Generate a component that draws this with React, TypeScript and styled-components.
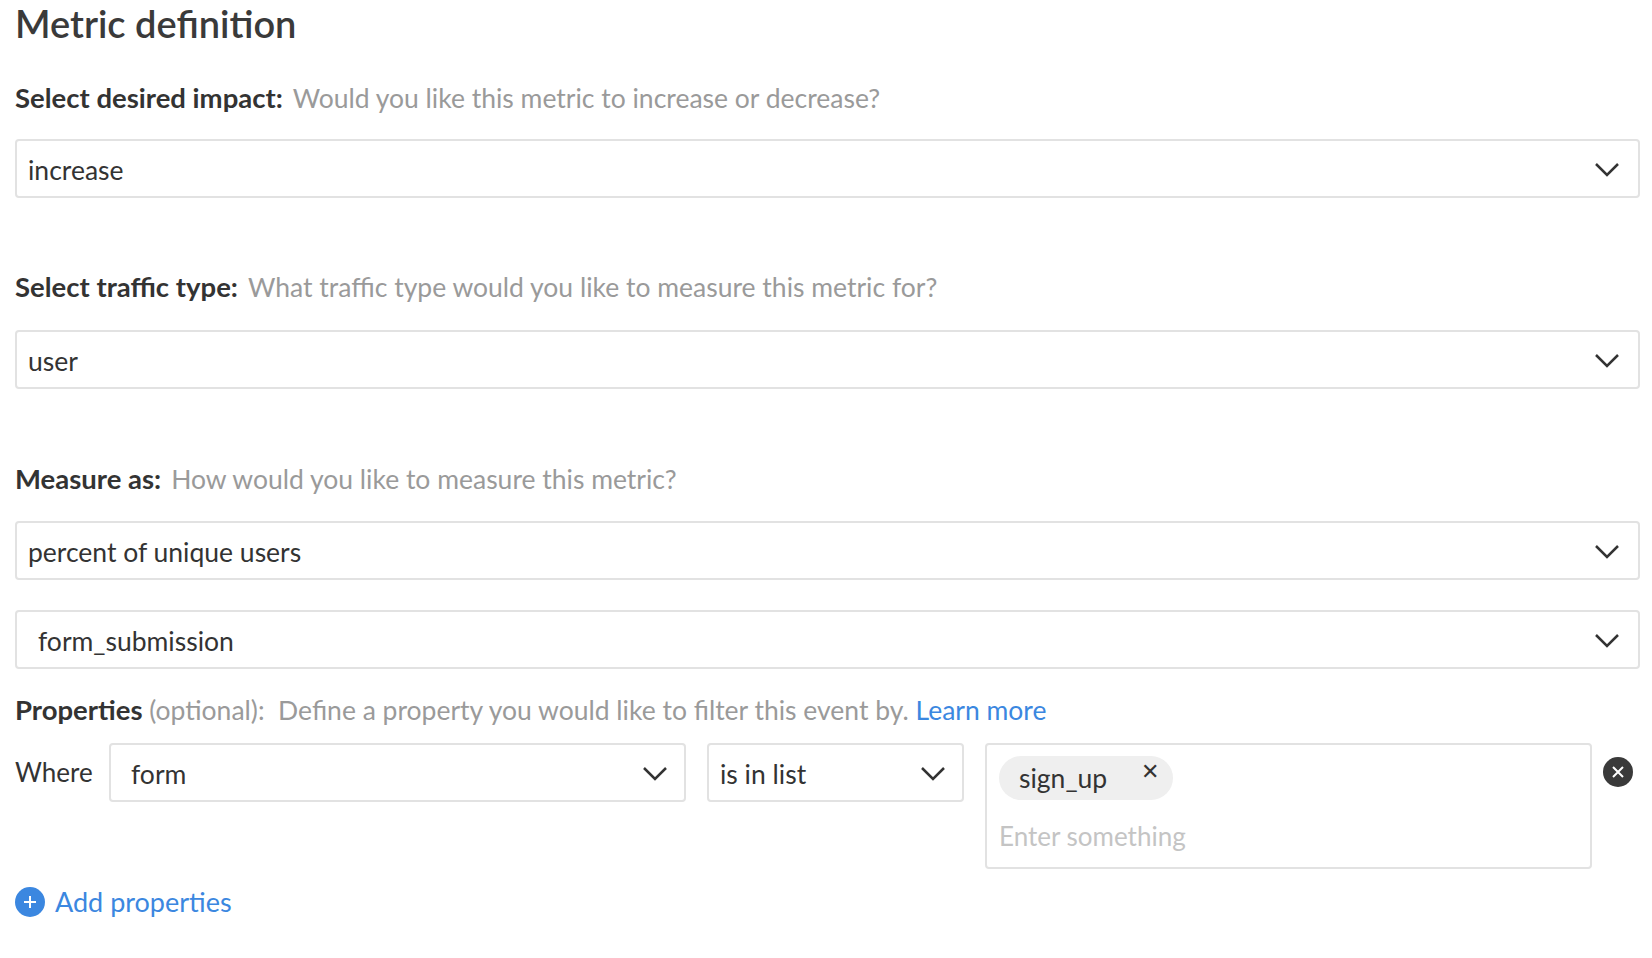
import React from "react";
import styled, { createGlobalStyle } from "styled-components";

const Global = createGlobalStyle`
  body { margin: 0; background: #fff; font-family: Lato, "Open Sans", sans-serif; color: #333; }
`;

const Page = styled.div`
  padding: 0 14px 0 15px;
  width: 1625px;
`;

const Title = styled.h1`
  margin: 0;
  font-size: 38px;
  font-weight: 600;
  line-height: 46px;
  color: #3a3a3a;
`;

const Label = styled.div<{ $top: number }>`
  margin-top: ${(p) => p.$top}px;
  font-size: 26.5px;
  line-height: 32px;
  color: #9a9a9a;
  b { color: #333; font-weight: 700; margin-right: 10px; font-size: 27.5px; }
  a { color: #3b87e0; text-decoration: none; }
`;

const SelectBox = styled.div<{ $top: number; $pad?: number }>`
  margin-top: ${(p) => p.$top}px;
  height: 59px;
  box-sizing: border-box;
  border: 2px solid #e2e2e2;
  border-radius: 4px;
  display: flex;
  align-items: center;
  justify-content: space-between;
  padding: 2px 18px 0 ${(p) => p.$pad ?? 11}px;
  font-size: 26.5px;
  color: #333;
`;

const Chevron = () => (
  <svg width="26" height="16" viewBox="0 0 26 16">
    <path d="M2 2 L13 13 L24 2" fill="none" stroke="#333" strokeWidth="2.5" />
  </svg>
);

const Row = styled.div`
  margin-top: 17px;
  display: flex;
  align-items: flex-start;
  gap: 21px;
`;

const Where = styled.div`
  font-size: 26px;
  line-height: 59px;
  width: 73px;
`;

const Small = styled(SelectBox)<{ $w: number }>`
  margin-top: 0;
  width: ${(p) => p.$w}px;
  padding-left: 20px;
  padding-right: 16px;
`;

const TagBox = styled.div`
  width: 607px;
  height: 126px;
  box-sizing: border-box;
  border: 2px solid #e2e2e2;
  border-radius: 4px;
  padding: 11px 12px;
  display: flex;
  flex-direction: column;
  gap: 20px;
`;

const Tag = styled.div`
  align-self: flex-start;
  background: #efefef;
  border-radius: 22px;
  height: 44px;
  padding: 0 14px 0 20px;
  display: flex;
  align-items: flex-start;
  font-size: 26.5px;
  line-height: 44px;
  gap: 34px;
  span.x { font-size: 22px; line-height: 30px; }
`;

const Placeholder = styled.div`
  font-size: 26px;
  color: #c4c4c4;
`;

const Remove = styled.div`
  width: 30px;
  height: 30px;
  border-radius: 50%;
  background: #3a3a3a;
  margin-top: 14px;
  margin-left: -10px;
  display: flex;
  align-items: center;
  justify-content: center;
`;

const Add = styled.div`
  margin-top: 16px;
  display: flex;
  align-items: center;
  gap: 10px;
  font-size: 27px;
  color: #3b87e0;
`;

const Plus = styled.div`
  width: 30px;
  height: 30px;
  border-radius: 50%;
  background: #3b87e0;
  display: flex;
  align-items: center;
  justify-content: center;
`;

export default function App() {
  return (
    <Page>
      <Global />
      <Title>Metric definition</Title>
      <Label $top={36}><b>Select desired impact:</b>Would you like this metric to increase or decrease?</Label>
      <SelectBox $top={25}>increase<Chevron /></SelectBox>
      <Label $top={73}><b>Select traffic type:</b>What traffic type would you like to measure this metric for?</Label>
      <SelectBox $top={27}>user<Chevron /></SelectBox>
      <Label $top={74}><b>Measure as:</b>How would you like to measure this metric?</Label>
      <SelectBox $top={26}>percent of unique users<Chevron /></SelectBox>
      <SelectBox $top={30} $pad={21}>form_submission<Chevron /></SelectBox>
      <Label $top={25}><b style={{ marginRight: 0 }}>Properties</b> (optional):&nbsp; Define a property you would like to filter this event by. <a>Learn more</a></Label>
      <Row>
        <Where>Where</Where>
        <Small $w={577}>form<Chevron /></Small>
        <Small $w={257} style={{ paddingLeft: 11 }}>is in list<Chevron /></Small>
        <TagBox>
          <Tag>sign_up<span className="x">✕</span></Tag>
          <Placeholder>Enter something</Placeholder>
        </TagBox>
        <Remove>
          <svg width="14" height="14" viewBox="0 0 14 14"><path d="M2 2L12 12M12 2L2 12" stroke="#fff" strokeWidth="2" /></svg>
        </Remove>
      </Row>
      <Add>
        <Plus>
          <svg width="14" height="14" viewBox="0 0 14 14"><path d="M7 1V13M1 7H13" stroke="#fff" strokeWidth="2" /></svg>
        </Plus>
        Add properties
      </Add>
    </Page>
  );
}
